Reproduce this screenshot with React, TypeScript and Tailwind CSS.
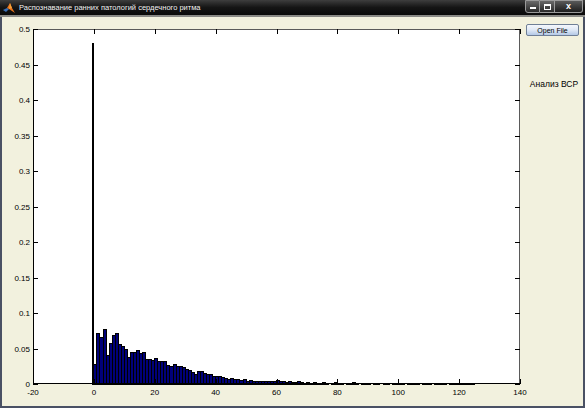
import React from "react";

// histogram bins (width 1, left edge at 0)
const bins: number[] = [
  0.027, 0.071, 0.066, 0.077, 0.04, 0.057, 0.069, 0.071, 0.055, 0.053,
  0.048, 0.038, 0.045, 0.045, 0.047, 0.043, 0.044, 0.034, 0.035, 0.033,
  0.036, 0.032, 0.032, 0.031, 0.026, 0.025, 0.028, 0.025, 0.025, 0.023,
  0.021, 0.019, 0.016, 0.014, 0.018, 0.017, 0.015, 0.013, 0.014, 0.011,
  0.01, 0.011, 0.009, 0.008, 0.007, 0.008, 0.006, 0.007, 0.005, 0.006,
  0.004, 0.005, 0.003, 0.004, 0.003, 0.004, 0.003, 0.003, 0.004, 0.003,
  0.005, 0.004, 0.003, 0.002, 0.003, 0.002, 0.002, 0.003, 0.002, 0.001,
  0.002, 0.001, 0.002, 0.001, 0.001, 0.002, 0.001, 0, 0.001, 0.002,
  0.001, 0.001, 0, 0.001, 0.001, 0.002, 0.001, 0, 0.001, 0.001,
  0.001, 0, 0.001, 0.001, 0, 0.001, 0.001, 0, 0.001, 0.001,
  0.001, 0.001, 0, 0.001, 0.001, 0.001, 0.001, 0, 0.001, 0.001,
  0.001, 0, 0.001, 0.001, 0.001, 0.001, 0, 0.001, 0.001, 0.001,
  0.001, 0.001, 0.001, 0.001, 0.001,
];

const L = 33;
const R = 520;
const T = 29;
const B = 384;
const X = (u: number) => L + ((u + 20) * (R - L)) / 160;
const Y = (v: number) => B - (v * (B - T)) / 0.5;

const xTicks = [-20, 0, 20, 40, 60, 80, 100, 120, 140];
const yTicks = [0, 0.05, 0.1, 0.15, 0.2, 0.25, 0.3, 0.35, 0.4, 0.45, 0.5];

const Chart = () => (
  <svg width={524} height={389} viewBox="2 17 524 389" className="block shrink-0 overflow-visible">
    <rect x={L} y={T} width={R - L} height={B - T} fill="#fff" />
    <g shapeRendering="crispEdges" stroke="#000" strokeWidth={1}>
      <rect x={X(-0.55)} y={Y(0.48)} width={X(0) - X(-0.55)} height={B - Y(0.48)} fill="#00007a" />
      {bins.map((v, i) =>
        v > 0 ? (
          <rect
            key={i}
            x={X(i)}
            y={Y(v)}
            width={X(i + 1) - X(i)}
            height={B - Y(v)}
            fill="#00007a"
          />
        ) : null
      )}
    </g>
    <g shapeRendering="crispEdges" stroke="#000" strokeWidth={1} fill="none">
      <rect x={L + 0.5} y={T + 0.5} width={R - L - 1} height={B - T - 1} stroke="#5a5a5a" />
      <line x1={L} y1={B - 0.5} x2={R} y2={B - 0.5} />
      <line x1={L + 0.5} y1={T} x2={L + 0.5} y2={B} />
      {xTicks.map((t) => (
        <g key={t}>
          <line x1={Math.round(X(t)) + 0.5} y1={B} x2={Math.round(X(t)) + 0.5} y2={B - 5} />
          <line x1={Math.round(X(t)) + 0.5} y1={T} x2={Math.round(X(t)) + 0.5} y2={T + 5} />
        </g>
      ))}
      {yTicks.map((t) => (
        <g key={t}>
          <line x1={L} y1={Math.round(Y(t)) + 0.5} x2={L + 5} y2={Math.round(Y(t)) + 0.5} />
          <line x1={R} y1={Math.round(Y(t)) + 0.5} x2={R - 5} y2={Math.round(Y(t)) + 0.5} />
        </g>
      ))}
    </g>
    <g fontFamily="'Liberation Sans', Arial, sans-serif" fontSize={8} fill="#000">
      {xTicks.map((t) => (
        <text key={t} x={X(t)} y={395} textAnchor="middle">
          {t}
        </text>
      ))}
      {yTicks.map((t) => (
        <text key={t} x={30} y={Y(t) + 3} textAnchor="end">
          {t}
        </text>
      ))}
    </g>
  </svg>
);

const MatlabIcon = () => (
  <svg width={12} height={12} viewBox="0 0 12 12" className="shrink-0">
    <path d="M0 8 L4 6 L6 7 L3 10 Z" fill="#3b6fb6" />
    <path d="M4 6 L7 1 L9 6 L12 11 L9 9 L6 7 Z" fill="#e8731c" />
    <path d="M7 1 L9 6 L6 7 Z" fill="#f5a23a" />
  </svg>
);

export default function App() {
  return (
    <div className="w-[585px] h-[408px] flex flex-col overflow-hidden bg-[#f2f1de] font-['Liberation_Sans',Arial,sans-serif]">
      <div className="h-[17px] shrink-0 flex items-start bg-gradient-to-b from-[#3e3e3e] via-[#151515] to-[#0a0a0a] border-b-2 border-[#8a8a86]">
        <div className="flex items-center gap-[4px] pl-[3px] pt-[2px]">
          <MatlabIcon />
          <span className="text-[7.5px] leading-none text-[#f2f2f2] whitespace-nowrap">
            Распознавание ранних патологий сердечного ритма
          </span>
        </div>
        <div className="ml-auto mr-[2px] flex h-[13px]">
          <div className="w-[15px] flex items-end justify-center pb-[3px] bg-gradient-to-b from-[#6a6a6a] to-[#2a2a2a] border border-[#9a9a9a] rounded-bl-[3px]">
            <div className="w-[6px] h-[2px] bg-white" />
          </div>
          <div className="w-[15px] flex items-center justify-center bg-gradient-to-b from-[#6a6a6a] to-[#2a2a2a] border-y border-r border-[#9a9a9a]">
            <div className="w-[7px] h-[6px] border border-white border-t-2" />
          </div>
          <div className="w-[28px] flex items-center justify-center bg-gradient-to-b from-[#5a5a5a] to-[#1e1e1e] border-y border-r border-[#9a9a9a] rounded-br-[3px] text-white text-[9px] leading-none font-bold">
            x
          </div>
        </div>
      </div>
      <div className="flex-1 flex border-x-2 border-b-2 border-[#4a5164]">
        <Chart />
        <div className="flex-1 flex flex-col">
          <button className="mt-[7px] w-[53px] h-[12px] rounded-[2px] border border-[#6f7f96] bg-gradient-to-b from-[#f4f7fc] via-[#dfe8f5] to-[#b4c9e6] text-[7px] leading-none text-black">
            Open File
          </button>
          <div className="mt-[44px] text-[8.5px] leading-none text-black text-center pr-[1px] whitespace-nowrap">Анализ ВСР</div>
        </div>
      </div>
    </div>
  );
}
